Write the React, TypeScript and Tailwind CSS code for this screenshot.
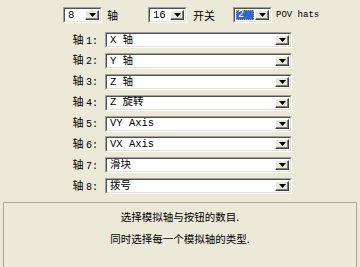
const cjk = { fontFamily: '"Noto Sans CJK SC", "Liberation Sans", sans-serif' };
const mono = { fontFamily: '"Liberation Mono", "Noto Sans CJK SC", monospace' };

const axes = ['X 轴', 'Y 轴', 'Z 轴', 'Z 旋转', 'VY Axis', 'VX Axis', '滑块', '拨号'];

function Arrow() {
  return (
    <div className="flex h-full w-[14px] shrink-0 items-center justify-center border border-t-white border-l-white border-r-[#404040] border-b-[#404040] bg-[#ece9d8] shadow-[inset_-1px_-1px_0_#808080]">
      <svg width="7" height="4" viewBox="0 0 7 4">
        <polygon points="0,0 7,0 3.5,4" fill="#000" />
      </svg>
    </div>
  );
}

function Combo({ value, width, selected }: { value: string; width: string; selected?: boolean }) {
  return (
    <div className={`flex h-[16px] ${width} shrink-0 border border-t-[#a0a0a0] border-l-[#a0a0a0] border-r-white border-b-white`}>
      <div className="flex flex-1 border border-t-[#505050] border-l-[#505050] border-r-[#e4e1d4] border-b-[#e4e1d4] bg-white p-[1px]">
        <div className="flex min-w-0 flex-1 items-center pr-[1px]">
          {selected ? (
            <span className="flex h-full flex-1 items-center border border-dotted border-[#c0a040] bg-[#316ac5] pl-[1px] text-[10px] leading-none text-white" style={mono}>
              {value}
            </span>
          ) : (
            <span className="pl-[2px] text-[10.5px] leading-none text-black whitespace-nowrap" style={mono}>
              {value}
            </span>
          )}
        </div>
        <Arrow />
      </div>
    </div>
  );
}

export default function App() {
  return (
    <div className="flex h-[267px] w-[360px] flex-col overflow-hidden bg-[#ece9d8]" style={cjk}>
      <div className="flex items-center pl-[63px] pt-[7px]">
        <Combo value="8" width="w-[39px]" />
        <span className="ml-[5px] w-[41px] text-[11px] leading-none text-black">轴</span>
        <Combo value="16" width="w-[39px]" />
        <span className="ml-[6px] w-[40px] text-[11px] leading-none text-black">开关</span>
        <Combo value="2" width="w-[39px]" selected />
        <span className="ml-[4px] whitespace-nowrap text-[9px] leading-none text-black" style={mono}>POV hats</span>
      </div>

      <div className="mt-[9px] flex flex-col gap-[4.9px]">
        {axes.map((a, i) => (
          <div key={i} className="flex items-center">
            <span className="w-[98px] text-right text-[11px] leading-none text-black">
              轴 <span style={mono} className="text-[10px]">{i + 1}:</span>
            </span>
            <div className="ml-[7px]">
              <Combo value={a} width="w-[187px]" />
            </div>
          </div>
        ))}
      </div>

      <div className="mx-[3px] mt-[8px] flex flex-1 flex-col items-center border-t border-l border-r border-[#aca899] pt-[9px] text-[10.5px] leading-none text-black">
        <p>选择模拟轴与按钮的数目.</p>
        <p className="mt-[11px]">同时选择每一个模拟轴的类型.</p>
      </div>
    </div>
  );
}
